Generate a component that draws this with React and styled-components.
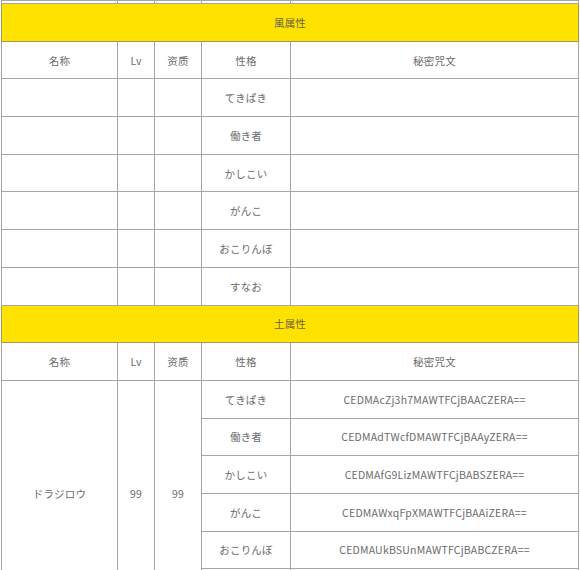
import React from "react";
import styled, { createGlobalStyle } from "styled-components";

const GlobalStyle = createGlobalStyle`
  html, body {
    margin: 0;
    padding: 0;
    background: #fff;
  }
  body {
    font-family: "Noto Sans CJK JP", "Noto Sans", sans-serif;
    color: #6b6b6b;
  }
`;

const traits = ["てきぱき", "働き者", "かしこい", "がんこ", "おこりんぼ", "すなお"];

const earthCodes = [
  "CEDMAcZj3h7MAWTFCjBAACZERA==",
  "CEDMAdTWcfDMAWTFCjBAAyZERA==",
  "CEDMAfG9LizMAWTFCjBABSZERA==",
  "CEDMAWxqFpXMAWTFCjBAAiZERA==",
  "CEDMAUkBSUnMAWTFCjBABCZERA==",
  "",
];

const Page = styled.div`
  width: 580px;
  height: 570px;
  overflow: hidden;
  padding-left: 1px;
  box-sizing: border-box;
`;

const Table = styled.table`
  width: 577px;
  table-layout: fixed;
  border-collapse: collapse;
  font-size: 10.5px;
  letter-spacing: 0.2px;

  td,
  th {
    border: 1px solid #a6a6a6;
    padding: 0;
    text-align: center;
    vertical-align: middle;
    font-weight: normal;
  }
`;

const Row = styled.tr`
  height: ${(p) => p.$h || 37.7}px;
`;

const SectionCell = styled.th`
  background: #ffe200;
  color: #6d6540;
  border-color: #a59a55 !important;
`;

const Cell = styled.td`
  color: #6b6b6b;
`;

const Section = ({ title, name, lv, quality, codes }) => (
  <>
    <Row>
      <SectionCell colSpan={5}>{title}</SectionCell>
    </Row>
    <Row>
      <Cell>名称</Cell>
      <Cell>Lv</Cell>
      <Cell>资质</Cell>
      <Cell>性格</Cell>
      <Cell>秘密咒文</Cell>
    </Row>
    {traits.map((t, i) => (
      <Row key={t}>
        {name ? (
          i === 0 && (
            <>
              <Cell rowSpan={6}>{name}</Cell>
              <Cell rowSpan={6}>{lv}</Cell>
              <Cell rowSpan={6}>{quality}</Cell>
            </>
          )
        ) : (
          <>
            <Cell />
            <Cell />
            <Cell />
          </>
        )}
        <Cell>{t}</Cell>
        <Cell>{codes ? codes[i] : ""}</Cell>
      </Row>
    ))}
  </>
);

export default function App() {
  return (
    <>
      <GlobalStyle />
      <Page>
        <Table>
          <colgroup>
            <col style={{ width: 116 }} />
            <col style={{ width: 37 }} />
            <col style={{ width: 47 }} />
            <col style={{ width: 89 }} />
            <col style={{ width: 288 }} />
          </colgroup>
          <tbody>
            <Row $h={3} style={{ borderTop: "none" }}>
              <Cell />
              <Cell />
              <Cell />
              <Cell />
              <Cell />
            </Row>
            <Section title="風属性" />
            <Section
              title="土属性"
              name="ドラジロウ"
              lv="99"
              quality="99"
              codes={earthCodes}
            />
          </tbody>
        </Table>
      </Page>
    </>
  );
}
